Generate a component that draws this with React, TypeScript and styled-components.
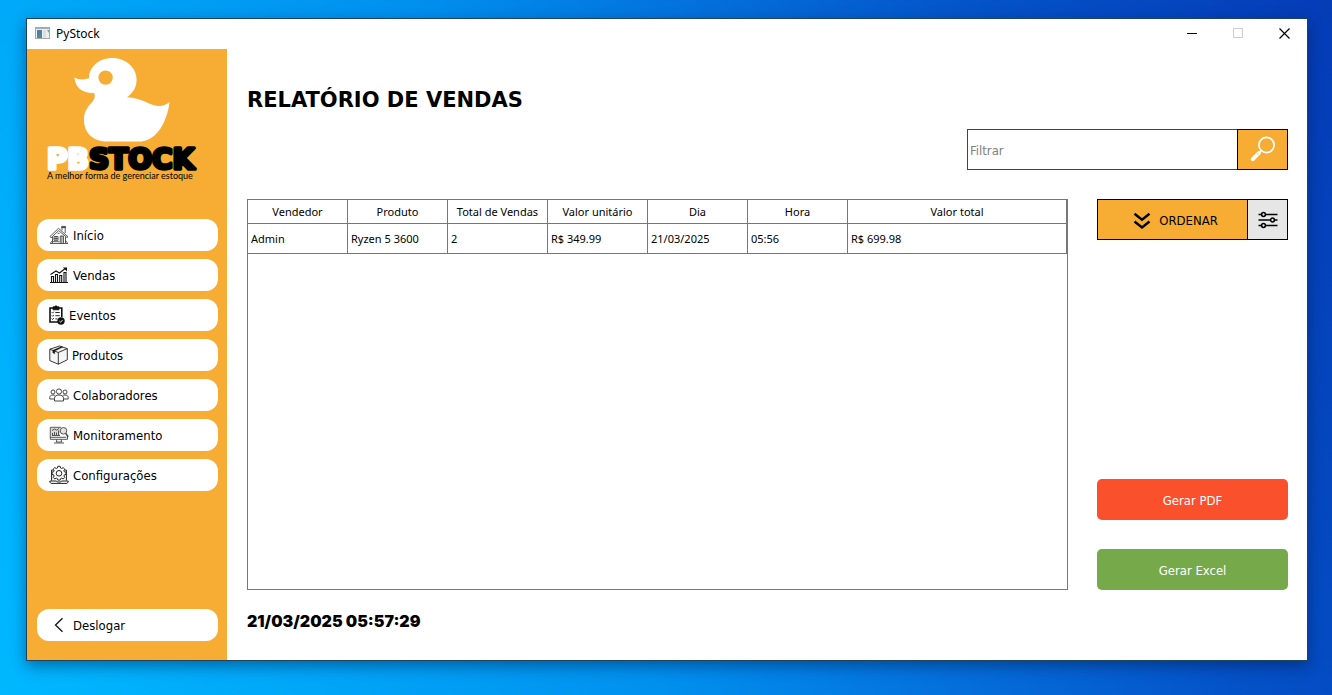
import React from "react";
import styled, { createGlobalStyle } from "styled-components";

const orange = "#f7ac34";
const uiFont = `"DejaVu Sans Condensed", "DejaVu Sans", sans-serif`;
const tableFont = `"Noto Sans", "Open Sans", sans-serif`;
const titleFont = `"DejaVu Sans", sans-serif`;
const clockFont = `Inter, "Liberation Sans", sans-serif`;

const GlobalStyle = createGlobalStyle`
  *, *::before, *::after { box-sizing: border-box; }
  body { margin: 0; font-family: ${uiFont}; font-size: 13px; color: #000; }
  button, input { font: inherit; color: inherit; margin: 0; }
  svg { display: block; flex: none; }
`;

const Desktop = styled.div`
  display: flex;
  min-height: 100vh;
  padding: 18px 24px 34px 26px;
  background: linear-gradient(70deg, #00b8ff 0%, #00a6f8 20%, #0090ee 42%, #0470dc 60%, #0452c8 78%, #043cb6 100%);
`;

const Window = styled.div`
  flex: 1;
  min-width: 0;
  display: flex;
  flex-direction: column;
  background: #fff;
  border: 1px solid #1d4560;
  box-shadow: 0 5px 14px rgba(0, 20, 60, 0.45);
`;

const TitleBar = styled.header`
  display: flex;
  align-items: center;
  height: 30px;
  padding: 0 0 2px 8px;
  font-family: ${tableFont};
  font-size: 12px;
`;

const AppName = styled.span`
  flex: 1;
  margin-left: 6px;
`;

const WindowButton = styled.button`
  display: grid;
  place-items: center;
  width: 46px;
  height: 28px;
  padding: 0;
  border: 0;
  background: none;
`;

const Body = styled.div`
  flex: 1;
  display: flex;
`;

const Sidebar = styled.aside`
  flex: none;
  display: flex;
  flex-direction: column;
  width: 200px;
  padding: 0 9px 19px 10px;
  background: ${orange};
`;

const Brand = styled.div`
  margin: 0 -9px 30px -10px;
`;

const Nav = styled.nav`
  flex: 1;
  display: flex;
  flex-direction: column;
  gap: 8px;
`;

const NavButton = styled.button`
  display: flex;
  align-items: center;
  gap: 4px;
  height: 32px;
  padding: 0 12px;
  border: 0;
  border-radius: 12px;
  background: #fff;
  text-align: left;
`;

const Main = styled.main`
  flex: 1;
  min-width: 0;
  display: flex;
  flex-direction: column;
  padding: 36px 19px 27px 20px;
`;

const Title = styled.h1`
  margin: 0 0 14px;
  font: 700 21px/30px ${titleFont};
`;

const SearchForm = styled.form`
  align-self: flex-end;
  display: flex;
  width: 321px;
  margin-bottom: 29px;
`;

const SearchInput = styled.input`
  flex: 1;
  min-width: 0;
  height: 41px;
  padding: 2px 2px 0;
  border: 1px solid #444;
  border-right: 0;
  background: #fff;
  outline: 0;
  &::placeholder { color: #808080; opacity: 1; }
`;

const SearchButton = styled.button`
  display: grid;
  place-items: center;
  width: 51px;
  padding: 0 0 1px;
  border: 1px solid #000;
  background: ${orange};
`;

const Content = styled.div`
  flex: 1;
  display: flex;
  gap: 29px;
`;

const TableFrame = styled.section`
  flex: 1;
  min-width: 0;
  border: 1px solid #777;
`;

const SalesTable = styled.table`
  width: 100%;
  table-layout: fixed;
  border-collapse: separate;
  border-spacing: 0;
  font-family: ${tableFont};
  font-size: 11px;
`;

const HeadCell = styled.th`
  height: 24px;
  padding: 0;
  border: solid #777;
  border-width: 0 1px 1px 0;
  font-weight: 400;
  &:not(:last-child) { width: 100px; }
`;

const Cell = styled.td`
  height: 30px;
  padding: 0 3px;
  border: solid #777;
  border-width: 0 1px 1px 0;
`;

const Actions = styled.aside`
  flex: none;
  display: flex;
  flex-direction: column;
  gap: 29px;
  width: 191px;
`;

const SortGroup = styled.div`
  display: flex;
  height: 41px;
  margin-bottom: auto;
`;

const SortButton = styled.button`
  flex: 1;
  display: flex;
  align-items: center;
  justify-content: center;
  gap: 8px;
  padding: 2px 0 0 6px;
  border: 1px solid #000;
  border-right: 0;
  background: ${orange};
`;

const OptionsButton = styled.button`
  display: grid;
  place-items: center;
  width: 41px;
  padding: 0;
  border: 1px solid #000;
  background: #e6e6e6;
`;

const ExportButton = styled.button<{ $color: string }>`
  height: 41px;
  padding: 2px 0 0;
  border: 0;
  border-radius: 5px;
  background: ${(p) => p.$color};
  color: #fff;
`;

const Clock = styled.time`
  margin-top: 19px;
  font: 900 16px/24px ${clockFont};
  font-optical-sizing: none;
`;

const AppIcon = () => (
  <svg width="15" height="12" viewBox="0 0 15 12" aria-hidden="true">
    <rect width="15" height="12" fill="#a4aab0" />
    <rect x="1" y="2" width="13" height="9" fill="#eceef0" />
    <rect x="2" y="3" width="5" height="8" fill="#4a8f86" />
    <path d="M2 3h5v3L2 9z" fill="#4f7fa6" />
    <rect x="8" y="3" width="3" height="8" fill="#dcdfe2" />
    <path d="M12 3h2v3z" fill="#6aa585" />
  </svg>
);

const Logo = () => (
  <svg width="200" height="140" viewBox="27 49 200 140" role="img" aria-label="PBStock">
    <path
      fill="#fff"
      fillRule="evenodd"
      d="M74.400 77.600C78.500 80 84.500 79.800 89 78.300C89.200 66.500 99 58 112.500 58C126 58 136.600 68 136.600 79.500C136.600 87 133.500 92.500 127 97.300C134 97.300 141.500 99.800 148 103C156.500 107 163 107.500 169.600 102C167.500 118 161 132 151 138C147 140.600 143 141.600 138 141.600H108C93 141.600 84 133 84 120C84 105.500 94.800 103.500 94.800 95.500C94.800 94.500 94.600 93.700 94 93C81.500 93.500 75.500 87.500 74.400 77.600ZM105.600 70.400A7.200 7.200 0 1 0 105.600 84.800A7.200 7.200 0 1 0 105.600 70.400Z"
    />
    <text x="47" y="169" fontFamily={titleFont} fontWeight="700" fontSize="28" strokeWidth="3.500" strokeLinejoin="round">
      <tspan fill="#fff" stroke="#fff">PB</tspan>
      <tspan fill="#000" stroke="#000">STOCK</tspan>
    </text>
    <text x="47" y="179" fontFamily="Lato, sans-serif" fontSize="9">
      A melhor forma de gerenciar estoque
    </text>
  </svg>
);

const HomeIcon = () => (
  <svg width="20" height="20" viewBox="0 0 20 20" fill="none" stroke="#333" strokeWidth=".8">
    <path d="M1 11.500 9.500 3.300 19 11.800l-1 .8-8.300-7L2 12.800zM13 5.200V2.200h3.200v5.800M12.600 1.400h4V2.600h-4z" />
    <path d="M3.500 12v6M16.500 12v6M1 18.500h18M5 11.500h4v3.800H5zM7 11.500v3.800M5 13.400h4M11.300 18.500V11h3.200v7.500M12.900 11v7.500M4 16.700h6.500" />
    <path d="M8.600 8.300h2M16.500 15.500l2 2.500M3.500 15.500l-2 2.500" />
  </svg>
);

const SalesIcon = () => (
  <svg width="20" height="20" viewBox="0 0 20 20" fill="none" stroke="#111">
    <path d="M1 17.500h18" strokeWidth="1" />
    <path d="M2.500 17.500v-6h2v6M6.500 17.500v-8h2v8M10.700 17.500v-7h2v7M15 17.500V7.500h2v10" strokeWidth="1.100" />
    <path d="M1.500 9.500 7 6 10.500 8l6-4.800" strokeWidth="1.100" />
    <path d="M14 2.500h4v4z" fill="#111" stroke="none" />
  </svg>
);

const EventsIcon = () => (
  <svg width="16" height="20" viewBox="0 0 16 20" fill="none" stroke="#111">
    <path d="M9.500 17H1V3h11.800v9" strokeWidth="1.600" />
    <path d="M4 1.800h1.600a1.500 1.500 0 0 1 2.800 0H10v3H4z" fill="#111" strokeWidth=".8" />
    <path d="M2.800 7.300l.8.800 1.200-1.400M2.800 10.500l.8.800L4.800 9.900M2.800 13.700l.8.800 1.200-1.400M6.300 7.500h4.500M6.300 10.700h4.500M6.300 13.900h2" strokeWidth=".9" />
    <circle cx="12" cy="16" r="3.700" fill="#111" stroke="none" />
    <path d="m10.400 16 1.200 1.200 2.100-2.300" stroke="#fff" strokeWidth=".9" />
  </svg>
);

const ProductsIcon = () => (
  <svg width="19" height="20" viewBox="0 0 19 20" fill="#f5f5f5" stroke="#222" strokeWidth=".9" strokeLinejoin="round">
    <path d="M.8 4.200 10.500 1l7.800 2.600v11.200L9.300 19.200.8 15.600z" />
    <path d="M.8 4.200 9.300 7.500l9-3.900M9.300 7.500v11.700" fill="none" />
    <path d="m3.800 5.300 8.700-3.700 1.500.5-8.200 3.900v3l-.9-.8-1.100-.2z" fill="#111" strokeWidth=".3" />
  </svg>
);

const TeamIcon = () => (
  <svg width="20" height="20" viewBox="0 0 20 20" fill="none" stroke="#333" strokeWidth=".9">
    <circle cx="10" cy="6.500" r="2.600" />
    <circle cx="4" cy="7" r="2" />
    <circle cx="16" cy="7" r="2" />
    <path d="M5.500 16v-2.500c0-2.200 1.600-3.500 4.500-3.500s4.500 1.300 4.500 3.500V16zM5.500 14H.8v-1.600C.8 10.800 2 10 4 10c.9 0 1.800.2 2.300.7M14.500 14h4.700v-1.600c0-1.600-1.200-2.400-3.200-2.400-.9 0-1.800.2-2.300.7" />
  </svg>
);

const MonitorIcon = () => (
  <svg width="20" height="20" viewBox="0 0 20 20" fill="none" stroke="#444" strokeWidth=".9">
    <path d="M12 2.300H1.300v12h17.200V11M1.300 12.300h16M8 14.300 7.300 17h5.400l-.7-2.700M5 18h10" />
    <path d="M2 3h9v9H2z" fill="#d8d8d8" stroke="none" />
    <path d="M3 10.500h8M3.500 10V8M5.500 10V7M7.500 10V7.500M9.500 10V5.500M3 5.500 5.500 4l2 1.200L10 3.400" />
    <circle cx="14.500" cy="5.800" r="3.300" fill="#e4e4e4" />
    <path d="m16.800 8.300 2.400 3.600" strokeWidth="1.500" />
  </svg>
);

const SettingsIcon = () => (
  <svg width="20" height="20" viewBox="0 0 20 20" fill="none" stroke="#222" strokeWidth="1">
    <path d="M4.500 5H2.600v10.500M15.500 5h1.900v10.500M.8 16h6.700l.8 1h3.400l.8-1h6.700c0 1.600-.7 2.400-2 2.400H2.800C1.500 18.400.8 17.600.8 16z" />
    <path d="M8.800 1.300h2.400l.4 1.700 1.100.5 1.500-.9 1.600 1.600-.9 1.500.5 1.100 1.700.4v2.200l-1.700.4-.5 1.200.9 1.400-1.600 1.600-1.500-.9-1.100.5-.4 1.500H8.800l-.4-1.500-1.100-.5-1.500.9-1.600-1.600.9-1.400-.5-1.200-1.700-.4V7.200l1.700-.4.500-1.100-.9-1.500 1.600-1.600 1.500.9L8.400 3z" />
    <circle cx="10" cy="8.300" r="2.800" />
  </svg>
);

const BackIcon = () => (
  <svg width="20" height="20" viewBox="0 0 20 20" fill="none" stroke="#111" strokeWidth="1.300">
    <path d="M13.500 3.300 6.500 10l7 6.800" />
  </svg>
);

const SearchIcon = () => (
  <svg width="26" height="26" viewBox="0 0 26 26" fill="none" stroke="#fff">
    <circle cx="16.500" cy="9" r="7.600" strokeWidth="1.700" />
    <path d="m11 14.800-2 2" strokeWidth="1.800" />
    <path d="m8.800 17.200-6 6" strokeWidth="4" strokeLinecap="round" />
    <path d="m6.300 16.900 2.700 2.700" stroke={orange} strokeWidth=".6" />
  </svg>
);

const SortIcon = () => (
  <svg width="18" height="18" viewBox="0 0 18 18" fill="none" stroke="#000" strokeWidth="2.400">
    <path d="m1.500 1.800 7.500 6 7.500-6M1.500 9.500l7.500 6 7.500-6" />
  </svg>
);

const SlidersIcon = () => (
  <svg width="20" height="18" viewBox="0 0 20 18" fill="#e6e6e6" stroke="#000" strokeWidth="1.500">
    <path d="M.5 3.500h19M.5 9h19M.5 14.500h19" />
    <circle cx="5.500" cy="3.500" r="1.900" />
    <circle cx="14.500" cy="9" r="1.900" />
    <circle cx="5.500" cy="14.500" r="1.900" />
  </svg>
);

const navItems = [
  { label: "Início", Icon: HomeIcon },
  { label: "Vendas", Icon: SalesIcon },
  { label: "Eventos", Icon: EventsIcon },
  { label: "Produtos", Icon: ProductsIcon },
  { label: "Colaboradores", Icon: TeamIcon },
  { label: "Monitoramento", Icon: MonitorIcon },
  { label: "Configurações", Icon: SettingsIcon },
];

const columns = ["Vendedor", "Produto", "Total de Vendas", "Valor unitário", "Dia", "Hora", "Valor total"];
const rows = [["Admin", "Ryzen 5 3600", "2", "R$ 349.99", "21/03/2025", "05:56", "R$ 699.98"]];

export default function App() {
  return (
    <>
      <GlobalStyle />
      <Desktop>
        <Window>
          <TitleBar>
            <AppIcon />
            <AppName>PyStock</AppName>
            <WindowButton aria-label="Minimizar">
              <svg width="11" height="11" stroke="#000"><path d="M0 5.500h10" /></svg>
            </WindowButton>
            <WindowButton aria-label="Maximizar" disabled>
              <svg width="11" height="11" fill="none" stroke="#ccc"><path d="M.5.500h9v9h-9z" /></svg>
            </WindowButton>
            <WindowButton aria-label="Fechar">
              <svg width="11" height="11" stroke="#000" strokeWidth="1.200"><path d="m.5.500 10 10M10.500.500l-10 10" /></svg>
            </WindowButton>
          </TitleBar>
          <Body>
            <Sidebar>
              <Brand><Logo /></Brand>
              <Nav>
                {navItems.map(({ label, Icon }) => (
                  <NavButton key={label}><Icon />{label}</NavButton>
                ))}
              </Nav>
              <NavButton><BackIcon />Deslogar</NavButton>
            </Sidebar>
            <Main>
              <Title>RELATÓRIO DE VENDAS</Title>
              <SearchForm onSubmit={(e) => e.preventDefault()}>
                <SearchInput aria-label="Filtrar" placeholder="Filtrar" />
                <SearchButton aria-label="Pesquisar"><SearchIcon /></SearchButton>
              </SearchForm>
              <Content>
                <TableFrame>
                  <SalesTable>
                    <thead>
                      <tr>{columns.map((c) => <HeadCell key={c} scope="col">{c}</HeadCell>)}</tr>
                    </thead>
                    <tbody>
                      {rows.map((row, i) => (
                        <tr key={i}>{row.map((v, j) => <Cell key={j}>{v}</Cell>)}</tr>
                      ))}
                    </tbody>
                  </SalesTable>
                </TableFrame>
                <Actions>
                  <SortGroup>
                    <SortButton><SortIcon />ORDENAR</SortButton>
                    <OptionsButton aria-label="Opções"><SlidersIcon /></OptionsButton>
                  </SortGroup>
                  <ExportButton $color="#fb502c">Gerar PDF</ExportButton>
                  <ExportButton $color="#75a949">Gerar Excel</ExportButton>
                </Actions>
              </Content>
              <Clock dateTime="2025-03-21T05:57:29">21/03/2025 05:57:29</Clock>
            </Main>
          </Body>
        </Window>
      </Desktop>
    </>
  );
}
